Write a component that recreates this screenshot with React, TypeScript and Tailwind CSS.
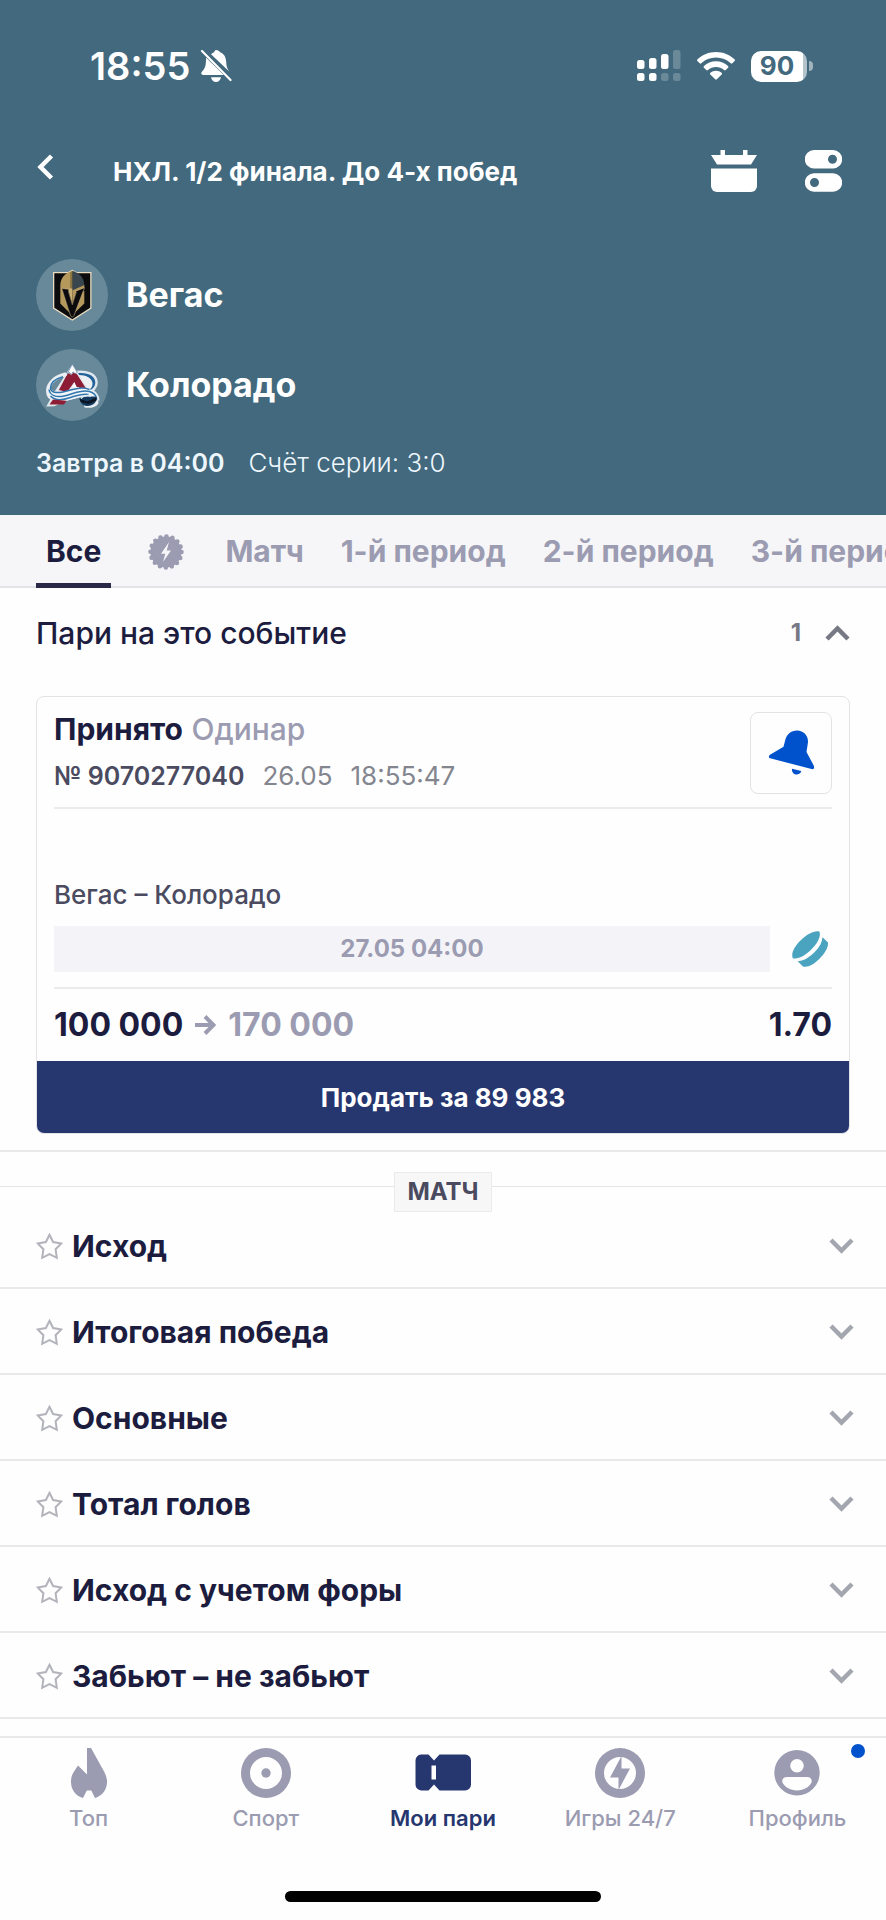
import type { ReactNode } from "react";

const tabs = ["Матч", "1-й период", "2-й период", "3-й период"];

const markets = [
  "Исход",
  "Итоговая победа",
  "Основные",
  "Тотал голов",
  "Исход с учетом форы",
  "Забьют – не забьют",
];

function StatusBar() {
  return (
    <div className="flex h-[132px] items-center justify-between pl-[90px] pr-[73px]">
      <div className="flex items-center gap-[10px]">
        <span className="text-[38px] font-semibold leading-none">18:55</span>
        <svg viewBox="0 0 32 34" className="h-[34px] w-8" fill="currentColor" aria-hidden>
          <path d="M16 1c2 0 3.300 1 3.900 2.200 4.300 1.300 6.100 5 6.300 9.800.2 4.500 1 7 3 9.500L11 5.200c1-.9 2-1.600 3.100-2C14.700 2 15 1 16 1Z" />
          <path d="M6.300 8.800 23.700 26H3c-1.600 0-2.300-1.700-1.300-2.900C4.700 20 5.700 17.500 5.900 13c.1-1.600.1-3 .4-4.200Z" />
          <path d="M11 28.300h10c-.6 3-2.500 4.700-5 4.700s-4.400-1.700-5-4.700Z" />
          <path d="m2 2 28.500 29" stroke="currentColor" strokeWidth="2.200" strokeLinecap="round" />
        </svg>
      </div>
      <div className="flex items-center">
        <svg viewBox="0 0 44 32" className="h-8 w-11" fill="currentColor" aria-hidden>
          <rect x="0" y="10" width="7.500" height="9" rx="2.500" />
          <rect x="12" y="8" width="7.500" height="11" rx="2.500" />
          <rect x="24" y="4" width="7.500" height="15" rx="2.500" />
          <rect x="36" y="0" width="7.500" height="19" rx="2.500" opacity=".22" />
          <rect x="0" y="23" width="7.500" height="8" rx="2.500" />
          <rect x="12" y="23" width="7.500" height="8" rx="2.500" />
          <rect x="24" y="23" width="7.500" height="8" rx="2.500" opacity=".22" />
          <rect x="36" y="23" width="7.500" height="8" rx="2.500" opacity=".22" />
        </svg>
        <svg viewBox="0 0 38 28" className="ml-4 h-7 w-[38px]" fill="currentColor" aria-hidden>
          <path d="M19 0c7.200 0 13.700 2.800 18.500 7.300.6.600.6 1.200.1 1.700l-2.300 2.300c-.5.500-1.100.5-1.600 0C29.900 7.700 24.700 5.500 19 5.500S8.100 7.700 4.300 11.300c-.5.500-1.100.5-1.600 0L.4 9c-.5-.5-.5-1.100.1-1.700C5.300 2.800 11.800 0 19 0Z" />
          <path d="M19 9.300c4.700 0 8.900 1.800 12 4.700.6.600.6 1.200.1 1.700l-2.400 2.400c-.5.500-1 .5-1.600 0-2.200-1.900-5-3.100-8.100-3.100s-5.900 1.200-8.100 3.100c-.6.500-1.100.5-1.600 0l-2.400-2.400c-.5-.5-.5-1.100.1-1.700 3.100-2.900 7.300-4.700 12-4.700Z" />
          <path d="M19 18.700c2.200 0 4.100.8 5.600 2.100.6.500.6 1.100.1 1.600l-4.900 4.900c-.5.500-1.100.5-1.600 0l-4.900-4.900c-.5-.5-.5-1.100.1-1.600 1.500-1.300 3.400-2.100 5.600-2.100Z" />
        </svg>
        <div className="ml-4 flex items-center gap-[2px]">
          <div className="flex h-[31px] w-14 items-center justify-center rounded-[10px] bg-linear-to-r from-white from-92% to-[#b3c3cb] to-92% pr-1 text-[26px] font-bold leading-none text-[#42697d]">
            90
          </div>
          <span className="h-[10px] w-1 rounded-r-full bg-white/50" />
        </div>
      </div>
    </div>
  );
}

function VegasLogo() {
  return (
    <svg viewBox="0 0 72 72" className="size-[72px]" role="img" aria-label="Вегас">
      <path d="M17 13h15l4.300-2.300L40.500 13H55.500v36.500L36.300 61.800 17 49.500Z" fill="#e9dcc0" />
      <path d="M18.300 14.300h14.500l3.500-2 3.500 2h14.400v34.500L36.300 60.300 18.300 48.800Z" fill="#0b0b0d" />
      <path d="M36.300 11.800c-7.500 2.700-12 7-12 15.200v17.500l9 9L26 29.500l10.300 3Z" fill="#b4985c" />
      <path d="M36.300 11.800c7.500 2.700 12 7 12 15.200L36.300 32.800Z" fill="#39464e" />
      <path d="M34.300 13.500 36.300 12v19l-2.300-1.500Z" fill="#8a7442" />
      <path d="m33.500 29 2.800.8v15l-3.500-12Z" fill="#c8af76" />
      <path d="M36.300 31.500 48.300 26v3l-8 3.700-4 12Z" fill="#b4985c" />
      <path d="M48.300 31.700v12.800l-9.300 9 6.200-19.600Z" fill="#b4985c" />
      <path
        d="m25.800 29.500 7 .7-.3 2.500 3.800 13 4-12.500-.7-1 8.900-3.500-10.600 28-1.600 1.600-1.800-1.600Z"
        fill="#0b0b0d"
        stroke="#dcc794"
        strokeWidth=".5"
      />
    </svg>
  );
}

function ColoradoLogo() {
  return (
    <svg viewBox="0 0 72 72" className="size-[72px]" role="img" aria-label="Колорадо">
      <path d="M36.500 24C51 21.500 60 26 60 33.500c0 4-2.500 6.500-4.500 8.500 3.500 2 6.300 5.500 6.300 9.500" fill="none" stroke="#dfe8ee" strokeWidth="3.600" />
      <path d="M42 24.700c10-.7 17 2.800 17 8.800 0 4-4 7.500-9 8.500L41 27Z" fill="#edf1f4" />
      <path d="M41 24.300c10.500-1.300 18.300 2.500 18.300 9.200 0 4.300-3.300 7.500-7.600 8.800 3.600-2.600 5-5 4.800-8-.3-5-6-8.300-14-8.300Z" fill="#23639a" />
      <path d="m36.300 15 18 28.500-15 4-21 9.800-8 .2 8-14.500Z" fill="#e4e9ed" />
      <path d="m36.300 15.300 5 8-2 1.500-2.300-2-1.700 3-1.800-2.300-2.400 1.500Z" fill="#fff" stroke="#4e7a9d" strokeWidth=".7" />
      <path d="m31 25.500 2.200-1.200 2 2 2.200-2.500 3.600 1.400 10.500 16.500-5 1.700L43 38h-6l1.300-5-7.200 10-8.200-2Z" fill="#8d1d35" />
      <path d="m38.300 33 2.700 5.500h-5Z" fill="#fff" />
      <path d="M29 25.500C19 28 12 34.500 12 42c0 5 3 8 8 8.500 13 1.300 20-5.500 30-4.500 7 .8 10.500 3.500 10.500 7.500-1.500 3-6 3.500-10.500 3.300" fill="none" stroke="#e8eef2" strokeWidth="4" strokeLinecap="round" />
      <path d="M14.500 35.500c-1 6 4 8.500 11.500 7.500 10-1.400 18-6.500 27-3 5.300 2 8.300 6.500 8.500 11.500-5-7-12-6-19-3.500-8 2.800-15 5.500-22.500 4-6.500-1.300-8.500-9.500-5.500-16.500Z" fill="#f2f6f8" />
      <path d="M27 27.700c-8.500 2.300-12.500 6.800-12.500 11.300 0 4.500 6 5.300 12.500 4 9-1.800 17.500-6.300 26.500-2.500M13 40.500c1 6 7 8.300 15 6.500 9-2 17-6.800 25.500-4.500 4.500 1.300 7 4.500 7.300 8M14.500 47c5 5.500 13 4 20 1.500 6-2 12-4.500 18-3" fill="none" stroke="#3176ae" strokeWidth="1.500" />
      <path d="m17 50.500 13.500 1.200-2.500 3.800H13.500Z" fill="#8d1d35" />
      <path d="M43.500 49.500c3-2 13-2.500 17-1.500.5 5.500-3.500 9-9 9-4 0-7.500-2.500-8-7.500Z" fill="#123a5e" />
      <path d="m43.500 50 8 2.500 9-4v3l-8 3.500-7.500-2Z" fill="#0c1420" />
      <path d="M45 49.500c2-3 7-4 10-2" fill="none" stroke="#dfe8ee" strokeWidth="1.400" />
    </svg>
  );
}

function Team({ name, logo }: { name: string; logo: ReactNode }) {
  return (
    <div className="flex items-center gap-[18px]">
      <span className="flex size-[72px] items-center justify-center rounded-full bg-[#68899a]">{logo}</span>
      <span className="text-[34px] font-bold leading-10">{name}</span>
    </div>
  );
}

function FlashBadge() {
  return (
    <svg viewBox="0 0 36 36" className="size-9" fill="currentColor" aria-hidden>
      <circle cx="18" cy="18" r="15.500" />
      <circle cx="18" cy="18" r="15.500" fill="none" stroke="currentColor" strokeWidth="4.600" strokeLinecap="round" strokeDasharray="0 6.087" />
      <path d="m21 8-8 11.700h4.300L15 28l8-11.500h-4.300Z" fill="#f6f6f8" />
    </svg>
  );
}

function Chevron({ className, d = "m2 2 10.500 10.500L23 2" }: { className: string; d?: string }) {
  return (
    <svg viewBox="0 0 25 16" className={className} fill="none" stroke="currentColor" strokeWidth="4.500" aria-hidden>
      <path d={d} />
    </svg>
  );
}

function Header() {
  return (
    <header className="bg-[#42697d] pb-[34px] text-white">
      <StatusBar />
      <div className="flex h-[77px] items-center px-9">
        <button type="button" aria-label="Назад" className="w-[77px]">
          <svg viewBox="0 0 18 26" className="mb-2 h-[26px] w-[18px]" fill="none" stroke="currentColor" strokeWidth="4.500" aria-hidden>
            <path d="M15.500 2 4.500 13l11 11" />
          </svg>
        </button>
        <h1 className="flex-1 pt-[2px] text-[26px] font-bold">НХЛ. 1/2 финала. До 4-х побед</h1>
        <button type="button" aria-label="Календарь">
          <svg viewBox="0 0 46 42" className="h-[42px] w-[46px]" fill="currentColor" aria-hidden>
            <path d="M0 5h9.500V0H14v5h18V0h4.500v5H46l-6 9.500H6Z" />
            <path d="M0 18.500h46V36a6 6 0 0 1-6 6H6a6 6 0 0 1-6-6Z" />
          </svg>
        </button>
        <button type="button" aria-label="Настройки" className="ml-12 mr-2">
          <svg viewBox="0 0 37 42" className="h-[42px] w-[37px]" fill="currentColor" fillRule="evenodd" aria-hidden>
            <path d="M9 0h19a9.200 9.200 0 0 1 0 18.400H9A9.200 9.200 0 0 1 9 0Zm18.500 4.700a4.500 4.500 0 1 0 0 9 4.500 4.500 0 0 0 0-9Z" />
            <path d="M9 23.300h19a9.200 9.200 0 0 1 0 18.400H9a9.200 9.200 0 0 1 0-18.400Zm.5 4.700a4.500 4.500 0 1 0 0 9 4.500 4.500 0 0 0 0-9Z" />
          </svg>
        </button>
      </div>
      <div className="mt-[50px] flex flex-col gap-[18px] px-9">
        <Team name="Вегас" logo={<VegasLogo />} />
        <Team name="Колорадо" logo={<ColoradoLogo />} />
      </div>
      <p className="mt-6 flex items-baseline gap-6 px-9 leading-9 text-[#eef7fd]">
        <span className="text-[25px] font-semibold">Завтра в 04:00</span>
        <span className="text-[26px] font-light">Счёт серии: 3:0</span>
      </p>
    </header>
  );
}

function Tabs() {
  return (
    <div className="flex h-[73px] gap-[37px] overflow-hidden bg-[#f6f6f8] pl-9 text-[30px] font-bold text-[#9b9bb1] shadow-[inset_0_-2px_0_#e1e3e6]">
      <button type="button" className="shrink-0 border-b-[5px] border-[#2a2847] px-[10px] pt-1 text-[#1c1c3f]">
        Все
      </button>
      <button type="button" aria-label="Быстрые" className="mr-1 shrink-0">
        <FlashBadge />
      </button>
      {tabs.map((tab) => (
        <button key={tab} type="button" className="shrink-0 whitespace-nowrap">
          {tab}
        </button>
      ))}
    </div>
  );
}

function BetCard() {
  return (
    <article className="mx-9 overflow-hidden rounded-lg border border-[#e3e3e7]">
      <div className="px-[17px]">
        <div className="flex h-28 items-center justify-between border-b-2 border-[#ebebed] pt-[2px]">
          <div>
            <p className="text-[30px] leading-[46px] text-[#9b9bb1]">
              <b className="text-[#1c1c3f]">Принято</b> <span className="font-medium">Одинар</span>
            </p>
            <p className="flex items-baseline gap-[18px] leading-[48px] text-[#83858f]">
              <span className="text-[25px] font-semibold text-[#4a4b60]">№ 9070277040</span>
              <span className="text-[26px]">26.05</span>
              <span className="text-[26px]">18:55:47</span>
            </p>
          </div>
          <button
            type="button"
            aria-label="Уведомления"
            className="flex size-[82px] items-center justify-center rounded-lg border border-[#e3e3e7] text-[#0052cc]"
          >
            <svg viewBox="0 0 46 46" className="size-[46px]" fill="currentColor" aria-hidden>
              <path d="M17 11C18.400 4.500 23 .5 29 .5c7.500 0 12 6.500 10.800 13L38.500 22l7.200 13.500c.8 2 .3 3.500-1.200 3.800L1.200 28C.6 27 .8 25.600 2 24.800l13.500-8Z" />
              <path d="m24 38.700 9.300 2.200a4.700 4.700 0 0 1-9.300-2.200Z" />
            </svg>
          </button>
        </div>
        <p className="mt-[68px] text-[26px] font-medium leading-9 text-[#4a4b60]">Вегас – Колорадо</p>
        <div className="mt-[13px] flex items-center gap-[22px] pr-1">
          <div className="flex-1 bg-[#f4f4f8] py-[5px] text-center text-2xl font-bold leading-9 text-[#9b9bb1]">
            27.05 04:00
          </div>
          <svg viewBox="0 0 36 36" className="size-9" fill="#4aa3bf" aria-hidden>
            <path d="M27.500.7c-4.300-1.700-12.300 2.300-19 8.800C2.300 15.600-1.200 22.500.8 27.200c5.500 1.300 12.500-2.700 18.700-9C25.700 12 29 5.500 27.500.7Z" />
            <path d="M30.500 6.200 36 11.500c.3 5.500-3.200 11-8.700 16.500-5.300 5.200-11.800 9-16.300 7.400l-5.300-5.100c5.500-.2 11.500-3.800 17-9.300 4.800-4.800 7.500-9.800 7.800-14.800Z" />
          </svg>
        </div>
        <div className="mt-[15px] flex h-[74px] items-center justify-between border-t-2 border-[#ebebed] text-[32px] font-bold text-[#1c1c3f]">
          <div className="flex items-center gap-3">
            <span>100 000</span>
            <svg viewBox="0 0 21 20" className="h-5 w-[21px]" fill="none" stroke="#9b9bb1" strokeWidth="4" aria-hidden>
              <path d="M0 10h18M10 1.500l8.500 8.500-8.500 8.500" />
            </svg>
            <span className="text-[#9b9bb1]">170 000</span>
          </div>
          <span>1.70</span>
        </div>
      </div>
      <button type="button" className="block h-[72px] w-full bg-[#26366f] text-[26px] font-bold text-white">
        Продать за 89 983
      </button>
    </article>
  );
}

function Markets() {
  return (
    <section className="mt-4 border-t-2 border-[#e9e9eb]">
      <div className="-mb-[9px] flex items-center pt-5">
        <span className="mb-3 h-px flex-1 bg-[#e6e6e8]" />
        <h2 className="border border-[#ebebed] bg-[#f7f7f8] px-3 text-2xl font-bold leading-[38px] text-[#4a4b60]">МАТЧ</h2>
        <span className="mb-3 h-px flex-1 bg-[#e6e6e8]" />
      </div>
      <ul>
        {markets.map((name) => (
          <li key={name} className="flex h-[86px] items-center border-b-2 border-[#e9e9eb] pl-9 pr-8 pt-[2px]">
            <button type="button" aria-label="В избранное" className="text-[#b3b4bb]">
              <svg viewBox="0 0 27 27" className="size-[27px]" fill="none" stroke="currentColor" strokeWidth="2" aria-hidden>
                <path d="m13.500 1.800 3.600 7.200 8.200 1.400-5.700 5.800 1.200 8.600-7.300-3.600-7.300 3.600 1.200-8.600-5.700-5.800 8.200-1.400Z" />
              </svg>
            </button>
            <button type="button" className="flex flex-1 items-center justify-between pl-[9px] text-left text-[30px] font-bold text-[#1c1c3f]">
              {name}
              <Chevron className="h-4 w-[25px] text-[#a4a6af]" />
            </button>
          </li>
        ))}
      </ul>
    </section>
  );
}

function NavItem({ label, active, children }: { label: string; active?: boolean; children: ReactNode }) {
  return (
    <a
      href="#"
      aria-current={active ? "page" : undefined}
      className={`flex flex-1 flex-col items-center pt-[10px] ${active ? "font-semibold text-[#26366f]" : "font-medium text-[#9b9bb1]"}`}
    >
      <svg viewBox="0 0 56 50" className="h-[50px] w-14" fill="currentColor" aria-hidden>
        {children}
      </svg>
      <span className="mt-1 whitespace-nowrap text-[22px] leading-8">{label}</span>
    </a>
  );
}

function BottomNav() {
  return (
    <nav className="relative mt-auto border-t-2 border-[#e9e9eb]">
      <div className="flex">
        <NavItem label="Топ">
          <path d="M26 0h4l12.500 22.500C44.800 26.500 46 30 46 34c0 7.500-4.500 13.700-12 16l-3.700-7.500h-4.500L22 50c-7.500-2-12-8.500-12-16 0-4.500 1-7.500 3-10.500l4-6 9 9Z" />
        </NavItem>
        <NavItem label="Спорт">
          <path fillRule="evenodd" d="M28 0a25 25 0 1 1 0 50 25 25 0 0 1 0-50Zm0 9a16 16 0 1 0 0 32 16 16 0 0 0 0-32Z" />
          <circle cx="28" cy="25" r="4.700" />
        </NavItem>
        <NavItem label="Мои пари" active>
          <path fillRule="evenodd" d="M6 6.500h7.500l5.500 6 5.500-6H50a6 6 0 0 1 6 6v24a6 6 0 0 1-6 6H24.500l-5.500-6-5.500 6H6a6 6 0 0 1-5.500-6v-24a6 6 0 0 1 5.500-6Zm10.500 11v14H21v-14Z" />
        </NavItem>
        <NavItem label="Игры 24/7">
          <path fillRule="evenodd" d="M28 0a25 25 0 1 1 0 50 25 25 0 0 1 0-50Zm0 9a16 16 0 1 0 0 32 16 16 0 0 0 0-32Z" />
          <path d="M29.500 8v12.500h8.500L26.500 42V29.500H18Z" />
        </NavItem>
        <NavItem label="Профиль">
          <path
            fillRule="evenodd"
            d="M28 2a22.700 22.700 0 1 1 0 45.400A22.700 22.700 0 0 1 28 2Zm0 9a6.800 6.800 0 1 0 0 13.600A6.800 6.800 0 0 0 28 11ZM13.500 34.500C15.500 38.800 21 42.500 28 42.500s12.500-3.700 14.500-8c.8-3.300-1-5.500-4.500-5.500H18c-3.500 0-5.300 2.200-4.500 5.500Z"
          />
        </NavItem>
      </div>
      <span className="absolute right-[21px] top-[6px] size-[14px] rounded-full bg-[#0052cc]" />
      <div className="mx-auto mb-[18px] mt-[57px] h-[11px] w-[316px] rounded-full bg-black" />
    </nav>
  );
}

export default function App() {
  return (
    <div className="flex min-h-screen flex-col bg-[#fefefe] font-['Inter','Noto_Sans',sans-serif]">
      <Header />
      <Tabs />
      <main>
        <button type="button" className="flex h-[108px] w-full items-center px-9 pb-[18px] text-left">
          <span className="flex-1 text-[30px] font-medium text-[#1c1c3f]">Пари на это событие</span>
          <span className="text-2xl font-bold text-[#767884]">1</span>
          <Chevron className="ml-6 h-4 w-[25px] text-[#767884]" d="M2 14 12.500 3.500 23 14" />
        </button>
        <BetCard />
        <Markets />
      </main>
      <BottomNav />
    </div>
  );
}
